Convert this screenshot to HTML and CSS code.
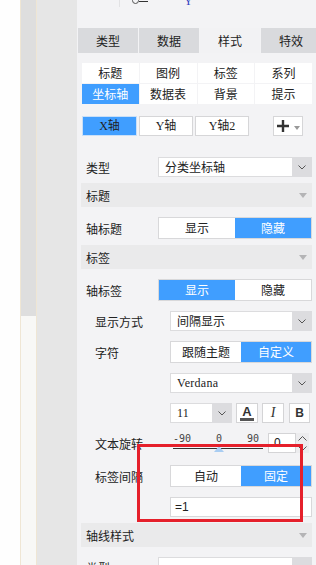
FILE: index.html
```html
<!DOCTYPE html>
<html lang="zh-CN">
<head>
    <meta charset="UTF-8">
    <meta name="viewport" content="width=device-width, initial-scale=1.0">
    <title>坐标轴样式</title>
    <link rel="stylesheet" href="styles.css">
</head>
<body>
    <div class="gutter"></div>
    <div class="rail"><div class="rail-top"></div></div>
    <div class="strip"></div>

    <div class="panel">
        <div class="peek">
            <span class="peek-line"></span>
            <span class="peek-radio"></span><span class="peek-dash"></span>
            <span class="peek-y">Y</span>
        </div>

        <div class="tabs">
            <div class="tab">类型</div>
            <div class="tab">数据</div>
            <div class="tab active">样式</div>
            <div class="tab">特效</div>
        </div>

        <div class="content">
            <div class="subtabs">
                <div class="subtab">标题</div>
                <div class="subtab">图例</div>
                <div class="subtab">标签</div>
                <div class="subtab">系列</div>
                <div class="subtab active">坐标轴</div>
                <div class="subtab">数据表</div>
                <div class="subtab">背景</div>
                <div class="subtab">提示</div>
            </div>

            <div class="axes">
                <div class="axis active">X轴</div>
                <div class="axis">Y轴</div>
                <div class="axis">Y轴2</div>
                <div class="add">
                    <svg width="16" height="14" viewBox="0 0 16 14"><path d="M6 1v12M0 7h12" stroke="#333" stroke-width="2.4" fill="none"/></svg>
                    <span class="add-caret"></span>
                </div>
            </div>

            <div class="row">
                <span class="label">类型</span>
                <div class="select">
                    <span class="value">分类坐标轴</span>
                    <span class="arrow"><svg width="8" height="5" viewBox="0 0 8 5"><path d="M0.5 0.5L4 4L7.5 0.5" stroke="#555" fill="none"/></svg></span>
                </div>
            </div>

            <div class="section">标题<span class="caret"></span></div>

            <div class="row">
                <span class="label">轴标题</span>
                <div class="toggle">
                    <span>显示</span>
                    <span class="on">隐藏</span>
                </div>
            </div>

            <div class="section">标签<span class="caret"></span></div>

            <div class="row">
                <span class="label">轴标签</span>
                <div class="toggle">
                    <span class="on">显示</span>
                    <span>隐藏</span>
                </div>
            </div>

            <div class="row sub">
                <span class="label">显示方式</span>
                <div class="select">
                    <span class="value">间隔显示</span>
                    <span class="arrow"><svg width="8" height="5" viewBox="0 0 8 5"><path d="M0.5 0.5L4 4L7.5 0.5" stroke="#555" fill="none"/></svg></span>
                </div>
            </div>

            <div class="row sub">
                <span class="label">字符</span>
                <div class="toggle">
                    <span>跟随主题</span>
                    <span class="on">自定义</span>
                </div>
            </div>

            <div class="row sub">
                <span class="label"></span>
                <div class="select">
                    <span class="value latin">Verdana</span>
                    <span class="arrow"><svg width="8" height="5" viewBox="0 0 8 5"><path d="M0.5 0.5L4 4L7.5 0.5" stroke="#555" fill="none"/></svg></span>
                </div>
            </div>

            <div class="row sub">
                <span class="label"></span>
                <div class="fontbar">
                    <div class="select size">
                        <span class="value latin">11</span>
                        <span class="arrow"><svg width="8" height="5" viewBox="0 0 8 5"><path d="M0.5 0.5L4 4L7.5 0.5" stroke="#555" fill="none"/></svg></span>
                    </div>
                    <span class="icon-btn color">A</span>
                    <span class="icon-btn italic">I</span>
                    <span class="icon-btn bold">B</span>
                </div>
            </div>

            <div class="row sub rotate">
                <span class="label">文本旋转</span>
                <div class="slider">
                    <div class="ticks"><span>-90</span><span>0</span><span>90</span></div>
                    <div class="track"><span class="thumb"></span></div>
                </div>
                <div class="spin">
                    <span class="num">0</span>
                    <span class="spin-arrows">
                        <svg width="9" height="5" viewBox="0 0 9 5"><path d="M0.5 4.5L4.5 0.5L8.5 4.5" stroke="#555" fill="none"/></svg>
                        <svg width="9" height="5" viewBox="0 0 9 5"><path d="M0.5 0.5L4.5 4.5L8.5 0.5" stroke="#555" fill="none"/></svg>
                    </span>
                </div>
            </div>

            <div class="row sub">
                <span class="label">标签间隔</span>
                <div class="toggle">
                    <span>自动</span>
                    <span class="on">固定</span>
                </div>
            </div>

            <div class="row sub">
                <span class="label"></span>
                <div class="input">=1</div>
            </div>

            <div class="section">轴线样式<span class="caret"></span></div>

            <div class="row">
                <span class="label">类型</span>
                <div class="select">
                    <span class="value"></span>
                    <span class="arrow"></span>
                </div>
            </div>
        </div>
    </div>

    <div class="mark"></div>
</body>
</html>
```

FILE: styles.css
```css
* {
    box-sizing: border-box;
}

body {
    margin: 0;
    width: 316px;
    height: 565px;
    overflow: hidden;
    display: flex;
    position: relative;
    font-family: "Noto Sans CJK SC", sans-serif;
    font-size: 12px;
    color: #222;
    background-color: #fefefe;
}

.gutter {
    width: 20px;
    flex-shrink: 0;
}

.rail {
    width: 17px;
    flex-shrink: 0;
    border-left: 1px solid #efe6d4;
    border-right: 1px solid #efe6d4;
    background-color: #f8f8f6;
}

.rail-top {
    height: 316px;
    background-color: #dedede;
}

.strip {
    width: 40px;
    flex-shrink: 0;
    background-color: #e6e6e6;
}

.panel {
    flex: 1;
    overflow: hidden;
    background-color: #f3f3f5;
}

/* bit of the previous control, cut off by the top edge */
.peek {
    height: 7px;
    overflow: hidden;
    display: flex;
    align-items: flex-end;
    padding-left: 42px;
}

.peek-line {
    width: 1px;
    height: 7px;
    background-color: #e2e2e4;
    margin-right: 12px;
}

.peek-radio {
    width: 7px;
    height: 7px;
    margin-bottom: 3px;
    border: 1px solid #555;
    border-radius: 50%;
}

.peek-dash {
    width: 9px;
    height: 1px;
    margin-bottom: 5px;
    background-color: #333;
}

.peek-y {
    margin-left: 36px;
    margin-bottom: 2px;
    font-family: "Liberation Serif", serif;
    font-size: 12px;
    line-height: 8px;
    color: #3040c0;
}

.tabs {
    display: flex;
    gap: 1px;
    margin-top: 21px;
    padding-left: 1px;
}

.tab {
    width: 60px;
    height: 25px;
    flex-shrink: 0;
    line-height: 25px;
    text-align: center;
    background-color: #d9dadd;
}

.tab.active {
    background-color: #f2f2f4;
}

.content {
    margin-left: 4px;
    width: 231px;
}

.subtabs {
    display: grid;
    grid-template-columns: repeat(4, 1fr);
    gap: 1px;
    margin: 10px 0 0 1px;
}

.subtab {
    height: 20px;
    line-height: 20px;
    text-align: center;
    background-color: #fff;
}

.subtab.active {
    background-color: #409eff;
    color: #fff;
}

.axes {
    display: flex;
    gap: 2px;
    margin: 12px 0 21px 1px;
    height: 20px;
}

.axis {
    width: 55px;
    line-height: 18px;
    text-align: center;
    font-family: "Liberation Serif", "Noto Sans CJK SC", serif;
    background-color: #fff;
    border: 1px solid #d6d6d8;
}

.axis + .axis {
    width: 54px;
}

.axis.active {
    background-color: #409eff;
    border-color: #c9dff7;
}

.add {
    margin-left: 22px;
    width: 30px;
    display: flex;
    align-items: center;
    justify-content: center;
    gap: 1px;
    background-color: #fff;
    border: 1px solid #d6d6d8;
}

.add-caret {
    border-top: 4px solid #999;
    border-left: 3px solid transparent;
    border-right: 3px solid transparent;
    margin-top: 3px;
}

.row {
    display: flex;
    align-items: center;
    margin-top: 10px;
    padding-left: 5px;
}

.row.sub {
    padding-left: 14px;
}

.label {
    width: 72px;
    flex-shrink: 0;
}

.row.sub .label {
    width: 75px;
}

.select {
    flex: 1;
    height: 20px;
    display: flex;
    background-color: #fff;
    border: 1px solid #dcdcde;
    border-right: none;
}

.select .value {
    flex: 1;
    padding-left: 6px;
    line-height: 18px;
}

.select .arrow {
    width: 20px;
    margin-top: -1px;
    margin-bottom: -1px;
    display: flex;
    align-items: center;
    justify-content: center;
    background-color: #dcdcdf;
}

.latin {
    font-family: "Liberation Serif", serif;
    font-size: 12px;
    letter-spacing: 0.3px;
}

.toggle {
    flex: 1;
    height: 22px;
    display: flex;
    border: 1px solid #d8d8da;
    background-color: #fff;
}

.toggle span {
    flex: 1;
    line-height: 20px;
    text-align: center;
}

.toggle .on {
    background-color: #409eff;
    color: #fff;
}

.section {
    height: 24px;
    margin-top: 6px;
    padding: 0 5px;
    display: flex;
    align-items: center;
    justify-content: space-between;
    background-color: #eaeaeb;
}

.caret {
    border-top: 5px solid #b4b4b6;
    border-left: 4px solid transparent;
    border-right: 4px solid transparent;
}

.fontbar {
    flex: 1;
    display: flex;
    gap: 4px;
    height: 20px;
}

.select.size {
    flex: none;
    width: 62px;
}

.icon-btn {
    width: 22px;
    text-align: center;
    line-height: 18px;
    background-color: #fff;
    border: 1px solid #d4d4d6;
    color: #333;
}

.icon-btn.color {
    font-family: "Liberation Sans", sans-serif;
    font-weight: bold;
    font-size: 13px;
    line-height: 13px;
    padding-top: 1px;
}

.icon-btn.color::after {
    content: "";
    display: block;
    width: 14px;
    height: 3px;
    margin: 0 auto;
    background-color: #555;
}

.icon-btn.italic {
    font-family: "Liberation Serif", serif;
    font-style: italic;
    font-size: 14px;
}

.icon-btn.bold {
    font-family: "Liberation Sans", sans-serif;
    font-weight: bold;
    font-size: 12px;
    width: 21px;
    margin-left: 1px;
}

.row.rotate {
    height: 22px;
    align-items: flex-start;
}

.row.rotate .label {
    padding-top: 2px;
}

.slider {
    width: 95px;
    padding-left: 3px;
}

.ticks {
    display: flex;
    justify-content: space-between;
    padding: 1px 6px 0 0;
    font-family: "DejaVu Sans Mono", monospace;
    font-size: 10px;
    line-height: 10px;
    color: #444;
}

.track {
    position: relative;
    width: 90px;
    height: 1px;
    margin-top: 4px;
    background-color: #333;
}

.thumb {
    position: absolute;
    left: 41px;
    top: -2px;
    border-bottom: 6px solid #a9cdf2;
    border-left: 5px solid transparent;
    border-right: 5px solid transparent;
}

.spin {
    margin-left: 3px;
    width: 41px;
    height: 20px;
    display: flex;
}

.spin .num {
    width: 28px;
    padding-left: 5px;
    line-height: 18px;
    font-family: "Liberation Sans", sans-serif;
    background-color: #fff;
    border: 1px solid #d4d4d6;
}

.spin-arrows {
    flex: 1;
    display: flex;
    flex-direction: column;
    align-items: center;
    justify-content: space-around;
    background-color: #ececee;
}

.input {
    flex: 1;
    height: 20px;
    padding-left: 4px;
    line-height: 18px;
    font-family: "Liberation Sans", sans-serif;
    background-color: #fff;
    border: 1px solid #d8d8da;
}

/* red annotation drawn over the screenshot */
.mark {
    position: absolute;
    left: 137px;
    top: 444px;
    width: 166px;
    height: 78px;
    border: 3px solid #e5202b;
}
```
